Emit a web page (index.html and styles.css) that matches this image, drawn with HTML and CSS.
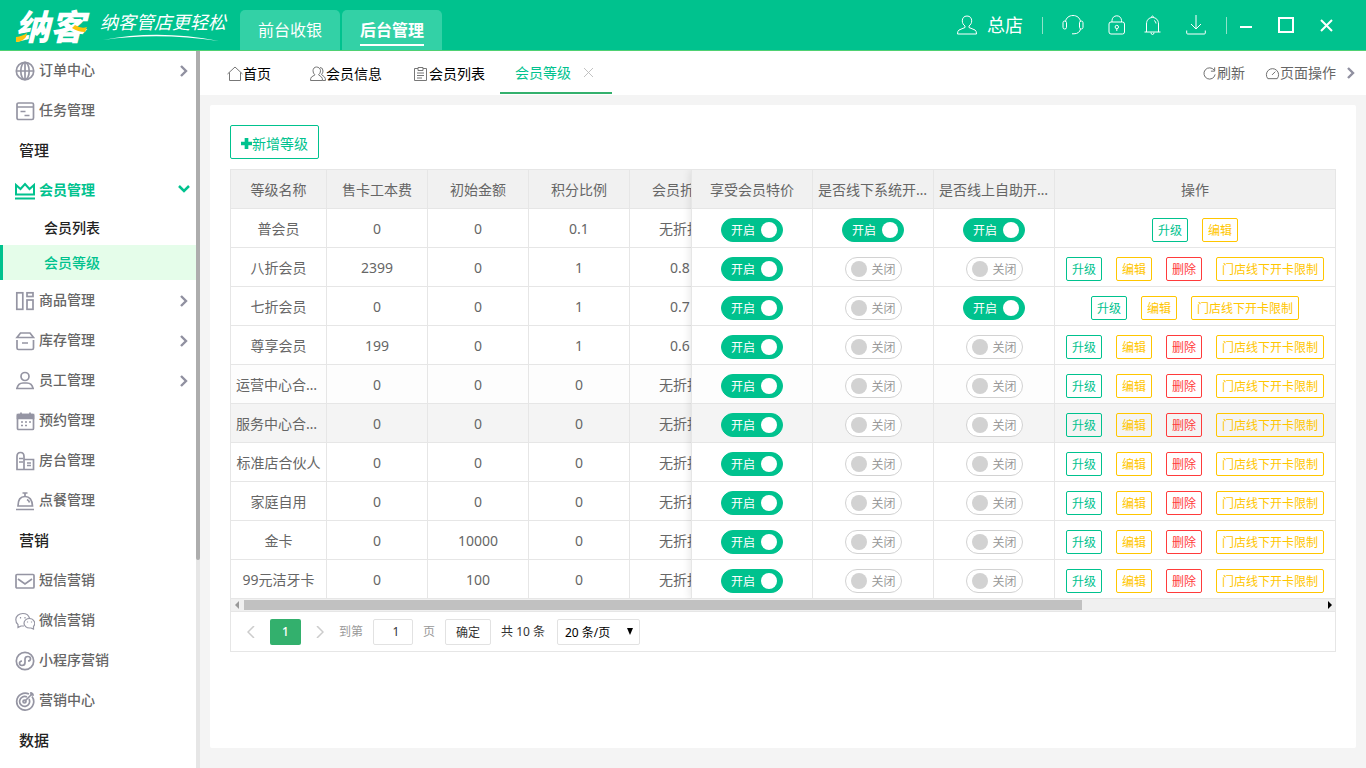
FILE: index.html
```html
<!DOCTYPE html>
<html lang="zh-CN">
<head>
<meta charset="utf-8">
<meta name="viewport" content="width=device-width, initial-scale=1">
<title>会员等级</title>
<link rel="stylesheet" href="styles.css">
</head>
<body>
<header class="topbar">
  <div class="brand">
    <span class="brand-name">纳客
      <svg class="brand-accent" viewBox="0 0 74 34" aria-hidden="true"><path d="M1 25q7-1 11-4l-1 4q-4 5-10 5z"/><path d="M60 13q6 4 12 2l-2 5q-7 0-13-4z"/></svg>
    </span>
    <span class="slogan">纳客管店更轻松
      <svg class="slogan-line" viewBox="0 0 118 8" aria-hidden="true"><path d="M1 6Q56-5 117 7Q56-2 1 6z"/></svg>
    </span>
  </div>
  <nav class="modes">
    <a class="mode" href="#cashier">前台收银</a>
    <a class="mode mode-active" href="#admin"><span>后台管理</span></a>
  </nav>
  <div class="tools">
    <button class="shop" type="button">
      <svg class="ico20" viewBox="0 0 20 20"><path d="M10 1c-3 0-4.700 2-4.700 4.800 0 2.200 1 4 2.700 5.200v1.500L2 15q-1.500 1-1.500 4h19q0-3-1.500-4l-6-2.500V11c1.700-1.200 2.700-3 2.700-5.200C14.700 3 13 1 10 1z"/></svg>
      <span>总店</span>
    </button>
    <i class="bar"></i>
    <button class="tool tool-headset" type="button" aria-label="客服"><svg class="ico22" viewBox="0 0 22 22"><path d="M3.500 7.500C4 4 7 1.500 11 1.500s7 2.500 7.500 6M18.500 15c-.5 3-3 4.800-6.500 4.800h-2"/><rect x="1" y="7" width="3.500" height="8" rx="1.700"/><rect x="17.500" y="7" width="3.500" height="8" rx="1.700"/></svg></button>
    <button class="tool" type="button" aria-label="锁屏"><svg class="ico20" viewBox="0 0 20 20"><rect x="2" y="7" width="15.500" height="12" rx="2"/><path d="M5 7V5.500C5 3 7 .8 9.800.8s4.700 2.200 4.700 4.700V7M9.800 13.500v2.500"/><circle cx="9.800" cy="12" r="1.700"/></svg></button>
    <button class="tool" type="button" aria-label="消息"><svg class="ico20" viewBox="0 0 20 20"><path d="M1.500 17h16M3.500 17V9c0-4 2.500-6.500 6-6.500s6 2.500 6 6.500v8M8.500 2.500q0-1.500 1-1.500t1 1.500M8 17.500q0 2 1.500 2t1.500-2M11 5.500q2 .8 2 3"/></svg></button>
    <button class="tool tool-down" type="button" aria-label="下载"><svg class="ico20" viewBox="0 0 20 20"><path d="M10 0v14M5 9l5 5 5-5M.7 15.500V18q0 1 1 1h16.600q1 0 1-1v-2.500"/></svg></button>
    <i class="bar"></i>
    <button class="win" type="button" aria-label="最小化"><svg class="ico18" viewBox="0 0 18 18"><path d="M3 11h12"/></svg></button>
    <button class="win" type="button" aria-label="最大化"><svg class="ico18" viewBox="0 0 18 18"><rect x="2" y="2" width="14" height="14"/></svg></button>
    <button class="win" type="button" aria-label="关闭"><svg class="ico18" viewBox="0 0 18 18"><path d="M4 4l11 11M15 4L4 15"/></svg></button>
  </div>
</header>
<div class="layout">
  <aside class="sidebar">
    <nav class="menu">
      <a class="item" href="#order"><svg class="ico20" viewBox="0 0 20 20"><circle cx="10" cy="10" r="8.700"/><ellipse cx="10" cy="10" rx="4.200" ry="8.700"/><path d="M1.500 10h17M10 1v18"/></svg><span>订单中心</span><svg class="arrow" viewBox="0 0 12 12"><path d="M3 1l5 5-5 5"/></svg></a>
      <a class="item" href="#task"><svg class="ico20" viewBox="0 0 20 20"><rect x="2" y="2" width="16.500" height="16.500" rx="1.500"/><path d="M2 6h16.500M5.500 10.500h5M9.500 14.500h5"/></svg><span>任务管理</span></a>
      <h2 class="group">管理</h2>
      <a class="item item-open" href="#member"><svg class="ico20" viewBox="0 0 20 20"><path d="M1 4v9.500h18V4l-4.500 4L10 3 5.500 8zM0 17.500h20"/></svg><span>会员管理</span><svg class="arrow" viewBox="0 0 12 12"><path d="M1 3l5 5 5-5"/></svg></a>
      <a class="sub" href="#list">会员列表</a>
      <a class="sub sub-active" href="#level">会员等级</a>
      <a class="item" href="#goods"><svg class="ico20" viewBox="0 0 20 20"><rect x="1.800" y="1.800" width="6" height="16.500"/><rect x="12" y="1.800" width="6" height="3.700"/><rect x="12" y="9" width="6" height="9.300"/></svg><span>商品管理</span><svg class="arrow" viewBox="0 0 12 12"><path d="M3 1l5 5-5 5"/></svg></a>
      <a class="item" href="#stock"><svg class="ico20" viewBox="0 0 20 20"><path d="M2 6.500h16.500L15 2H5.500zM2 9v8q0 1.500 1.500 1.500H17q1.500 0 1.500-1.500V9M7 12h6"/></svg><span>库存管理</span><svg class="arrow" viewBox="0 0 12 12"><path d="M3 1l5 5-5 5"/></svg></a>
      <a class="item" href="#staff"><svg class="ico20" viewBox="0 0 20 20"><circle cx="10" cy="5.500" r="4"/><path d="M2 17.500q1-5.500 6-5.500h4q5 0 6 5.500zM1 17.500h18"/></svg><span>员工管理</span><svg class="arrow" viewBox="0 0 12 12"><path d="M3 1l5 5-5 5"/></svg></a>
      <a class="item" href="#booking"><svg class="ico20" viewBox="0 0 20 20"><rect x="2.500" y="3.500" width="16" height="15" rx="1"/><path class="solid" d="M2.500 3.500h16v4h-16z"/><path d="M6 1.500v4M15 1.500v4M6 11h2M10 11h2M14 11h2M6 14.500h2M10 14.500h2"/></svg><span>预约管理</span></a>
      <a class="item" href="#room"><svg class="ico20" viewBox="0 0 20 20"><path d="M2 18.500v-13q0-4 3.500-4t3.500 4v13zM9 8.500h9.500v10H9M4 7.500h4M4 11h4M12 12h4M12 14.500h4"/></svg><span>房台管理</span></a>
      <a class="item" href="#dining"><svg class="ico20" viewBox="0 0 20 20"><path d="M1 18.500h18M3 15q0-9.500 7-9.500T17.500 15zM7.500 2h5M10 2v3M12 8.500q2 1 2.500 3"/></svg><span>点餐管理</span></a>
      <h2 class="group">营销</h2>
      <a class="item" href="#sms"><svg class="ico20" viewBox="0 0 20 20"><rect x="1" y="3.500" width="18" height="13.500" rx="1"/><path d="M3 8l7 5 7-5"/></svg><span>短信营销</span></a>
      <a class="item" href="#wechat"><svg class="ico20 thin" viewBox="0 0 20 20"><path d="M9 15H6l-3 1.500v-3Q.8 12 .8 8.500C.8 5 4 2.500 7.800 2.500c3.300 0 6 2 6.700 4.700M5.500 6v1.500M10 6v1.500"/><path d="M14.500 7.500c-3 0-5.500 2-5.500 4.700s2.500 4.800 5.500 4.800h1.500l2.500 1v-2.500c3-3.500 0-8-4-8zM12.500 10.500v1M16.500 10.500v1"/></svg><span>微信营销</span></a>
      <a class="item" href="#mini"><svg class="ico20" viewBox="0 0 20 20"><circle cx="10" cy="10" r="8.700"/><path d="M7 10q-2.500.2-2.500 2.300T7 14.500q3 0 3-3V8.300q0-2.800 2.800-2.800 2.700 0 2.700 2.200T13 10"/></svg><span>小程序营销</span></a>
      <a class="item" href="#promo"><svg class="ico20" viewBox="0 0 20 20"><path d="M17 5.500A8.500 8.500 0 1 1 14 3M14 8A5 5 0 1 1 12 6M9.500 10.500L18 2M16 1v3h3"/><circle cx="9.500" cy="10.500" r="1.500"/></svg><span>营销中心</span></a>
      <h2 class="group">数据</h2>
    </nav>
    <div class="side-scroll"><div class="side-thumb"></div></div>
  </aside>
  <main class="main">
    <div class="tabs">
      <a class="tab" href="#home"><svg class="ico16" viewBox="0 0 16 16"><path d="M.5 8L8 1l7.500 7M2.500 6.500v8h11v-8"/></svg><span>首页</span></a>
      <a class="tab" href="#info"><svg class="ico16" viewBox="0 0 16 16"><path d="M6.500 1C4.500 1 3 2.500 3 4.800q0 2.700 2 4L1.500 11Q.5 12 .5 14.500h12q0-2.500-1-3.500L8.500 8.800q2-1.300 2-4C10.500 2.500 8.500 1 6.500 1zM10 1.500q3 0 3 3.500 0 2-1.500 3.500l3 2.500q1 1 1 3.500h-3"/></svg><span>会员信息</span></a>
      <a class="tab" href="#list"><svg class="ico16" viewBox="0 0 16 16"><path d="M5 2.500H1.500v12h12v-12H10M5 1.500h5v3H5zM4 7h7M4 9.500h7M4 12h5"/></svg><span>会员列表</span></a>
      <a class="tab tab-active" href="#level"><span>会员等级</span><svg class="close" viewBox="0 0 10 10"><path d="M0 0l10 10M10 0L0 10"/></svg></a>
      <div class="page-tools">
        <button type="button"><svg class="ico16" viewBox="0 0 16 16"><path d="M13 4.500A6 6 0 1 0 14 9M13.500 1.500v4h-4"/></svg><span>刷新</span></button>
        <button type="button"><svg class="ico16" viewBox="0 0 16 16"><path d="M3 13.500a6.500 6.500 0 1 1 10 0zM7.500 9.500L11 6"/></svg><span>页面操作</span><svg class="arrow" viewBox="0 0 12 12"><path d="M3 1l5 5-5 5"/></svg></button>
      </div>
    </div>
    <section class="panel">
      <button class="add" type="button"><svg class="plus" viewBox="0 0 12 12"><path d="M6 0v12M0 6h12"/></svg><span>新增等级</span></button>
      <div class="grid">
        <div class="tables">
          <div class="scrolling">
            <table class="data">
              <colgroup><col class="c-name"><col class="c-num"><col class="c-num"><col class="c-num"><col class="c-num"></colgroup>
              <thead><tr><th>等级名称</th><th>售卡工本费</th><th>初始金额</th><th>积分比例</th><th>会员折扣</th></tr></thead>
              <tbody id="levels"></tbody>
            </table>
          </div>
          <div class="pinned">
            <table class="data">
              <colgroup><col class="c-flag"><col class="c-flag"><col class="c-flag"><col class="c-ops"></colgroup>
              <thead><tr><th>享受会员特价</th><th>是否线下系统开卡</th><th>是否线上自助开卡</th><th>操作</th></tr></thead>
              <tbody id="settings"></tbody>
            </table>
          </div>
        </div>
        <div class="hscroll">
          <svg class="hs-arrow hs-off" viewBox="0 0 12 12"><path d="M8 2v8L4 6z"/></svg>
          <div class="hs-track"><div class="hs-thumb"></div></div>
          <svg class="hs-arrow" viewBox="0 0 12 12"><path d="M5 2v8l4-4z"/></svg>
        </div>
        <div class="pager">
          <button class="step" type="button" aria-label="上一页"><svg viewBox="0 0 8 12"><path d="M7 0L1 6l6 6"/></svg></button>
          <button class="page" type="button">1</button>
          <button class="step" type="button" aria-label="下一页"><svg viewBox="0 0 8 12"><path d="M1 0l6 6-6 6"/></svg></button>
          <label class="muted" for="goto">到第</label>
          <input class="goto" id="goto" type="text" value="1">
          <span class="muted">页</span>
          <button class="ok" type="button">确定</button>
          <span class="total">共 10 条</span>
          <span class="size"><select aria-label="每页条数"><option>20 条/页</option></select></span>
        </div>
      </div>
    </section>
  </main>
</div>
<script src="script.js"></script>
</body>
</html>
```
FILE: styles.css
```css
* { box-sizing: border-box; }
body {
  margin: 0;
  height: 100vh;
  display: flex;
  flex-direction: column;
  overflow: hidden;
  background: #f4f4f4;
  color: #666;
  font: 14px/20px "Noto Sans", "Noto Sans CJK SC", sans-serif;
}
a { color: inherit; text-decoration: none; }
button, input, select { font: inherit; color: inherit; margin: 0; }
button { padding: 0; border: 0; background: none; cursor: pointer; }
svg { fill: none; stroke: currentColor; flex: none; display: block; }
.solid { fill: currentColor; }
.ico16 { width: 16px; height: 16px; }
.ico18 { width: 18px; height: 18px; }
.ico20 { width: 20px; height: 20px; }
.ico22 { width: 22px; height: 22px; }

/* Top bar */
.topbar {
  position: relative;
  z-index: 2;
  flex: none;
  display: flex;
  align-items: flex-end;
  height: 50px;
  background: #00c28e;
  box-shadow: 0 1px 0 #4fd173;
  color: #fff;
}
.brand { display: flex; align-items: center; width: 240px; height: 50px; padding-left: 15px; }
.brand-name { position: relative; width: 85px; padding-top: 3px; font-size: 35px; line-height: 47px; font-weight: 900; font-style: italic; }
.brand-accent { position: absolute; left: 0; top: 12px; width: 74px; height: 34px; fill: #fcc30b; stroke: none; }
.slogan { position: relative; font-size: 18px; line-height: 24px; font-style: italic; padding-bottom: 6px; white-space: nowrap; }
.slogan-line { position: absolute; left: 2px; bottom: -2px; width: 118px; height: 8px; fill: #fff; stroke: none; }
.modes { display: flex; gap: 2px; }
.mode { width: 100px; height: 40px; border-radius: 5px 5px 0 0; background: #33d1a6; font-size: 16px; line-height: 40px; text-align: center; }
.mode-active { font-weight: 700; }
.mode-active span { display: inline-block; line-height: 28px; border-bottom: 2px solid #fff; }
.tools { display: flex; align-items: center; height: 50px; margin-left: auto; padding-right: 31px; }
.shop { display: flex; align-items: center; gap: 10px; margin-right: 19px; font-size: 18px; }
.bar { width: 1px; height: 17px; background: #8fe2c9; }
.tool { margin-right: 16px; }
.tool-headset { margin: 0 23px 0 19px; }
.tool-down { margin: 0 20px 0 7px; }
.win { margin-left: 10px; }
.win + .win { margin-left: 22px; }
.win svg { stroke-width: 2; }

/* Sidebar */
.layout { flex: 1; display: flex; min-height: 0; }
.sidebar { flex: none; display: flex; width: 200px; background: #fff; }
.menu { flex: 1; overflow: hidden; }
.item { display: flex; align-items: center; height: 40px; padding: 0 6px 0 15px; gap: 4px; font-weight: 500; }
.item .ico20 { color: #9595a3; stroke-width: 1.700; margin-top: 2px; }
.item .thin { stroke-width: 1.200; }
.arrow { width: 12px; height: 12px; margin-left: auto; color: #9090a0; stroke-width: 2.400; }
.item .arrow { margin-top: 2px; }
.item-open { color: #00c28e; font-weight: 700; }
.item-open .ico20, .item-open .arrow { color: #00c28e; stroke-width: 2; }
.item-open .arrow { margin-top: -2px; stroke-width: 2.500; }
.group { margin: 0; padding-left: 19px; font-size: 15px; line-height: 40px; font-weight: 500; color: #222; }
.sub { display: block; padding-left: 44px; line-height: 35px; font-weight: 500; color: #222; }
.sub-active { padding-left: 41px; border-left: 3px solid #00c28e; background: #e5fdea; color: #00c28e; }
.side-scroll { width: 4px; background: #e6e6e6; }
.side-thumb { height: 71%; background: #adadad; border-radius: 0 0 2px 2px; }

/* Page tabs */
.main { flex: 1; min-width: 0; display: flex; flex-direction: column; }
.tabs { flex: none; display: flex; height: 45px; padding-left: 13px; background: #fff; }
.tab { display: flex; align-items: center; height: 44px; padding: 3px 17px 0 14px; margin-right: 0; color: #000; }
.tab:first-child { padding-right: 25px; }
.tab .ico16 { color: #777; }
.tab-active { padding: 3px 19px 0 15px; margin-left: -2px; gap: 13px; border-bottom: 2px solid #33b06d; color: #00c28e; }
.close { width: 9px; height: 9px; color: #bbb; }
.page-tools { display: flex; gap: 20px; margin-left: auto; padding-right: 9px; }
.page-tools button { display: flex; align-items: center; padding-top: 1px; }
.page-tools .ico16 { width: 15px; height: 15px; }
.page-tools .arrow { margin-left: 9px; }

/* Panel */
.panel { flex: 1; margin: 10px 10px 20px; padding: 20px; border-radius: 2px; background: #fff; }
.add { display: flex; align-items: center; height: 34px; margin-bottom: 10px; padding: 3px 10px 0; border: 1px solid #00c28e; border-radius: 2px; color: #00c28e; }
.plus { width: 11px; height: 11px; stroke-width: 4; }
.grid { border: 1px solid #e6e6e6; border-right-width: 0; box-shadow: inset -1px 0 0 #e6e6e6; }
.tables { display: flex; }
.scrolling { flex: 1; min-width: 0; overflow: hidden; }
.pinned { flex: none; position: relative; border-left: 1px solid #e6e6e6; background: #fff; box-shadow: -1px 0 8px rgba(0, 0, 0, .1); clip-path: inset(0 0 0 -10px); }
.data { table-layout: fixed; width: 0; border-collapse: separate; border-spacing: 0; }
.c-name { width: 96px; }
.c-num { width: 101px; }
.c-flag { width: 121px; }
.c-ops { width: 281px; }
.data th, .data td { height: 39px; padding: 2px 5px 0; border: solid #e6e6e6; border-width: 0 1px 1px 0; font-weight: 400; text-align: center; white-space: nowrap; overflow: hidden; text-overflow: ellipsis; }
.data th { background: #f1f1f1; }
.data tr.hover td { background: #f4f4f4; }
.data tr.fading td { background: #fdfdfd; }
.ops { display: flex; justify-content: center; gap: 14px; padding-top: 1px; }
.op { height: 24px; padding: 1px 5px 0; border: 1px solid; border-radius: 2px; background: #fff; font-size: 12px; line-height: 21px; }
.hover .op { background: none; }
.op-up { color: #00c28e; }
.op-edit { color: #ffc600; }
.op-del { color: #ff3b3b; }
.switch { display: flex; align-items: center; justify-content: space-between; width: 57px; height: 24px; margin: 1px auto 0; padding: 0 5px; border: 1px solid #d2d2d2; border-radius: 12px; background: #fff; color: #999; font-size: 12px; }
.switch span { padding-top: 2px; }
.switch input { appearance: none; width: 16px; height: 16px; margin: 0; border-radius: 50%; background: #d2d2d2; }
.switch:has(:checked) { flex-direction: row-reverse; width: 62px; padding-left: 9px; border-color: #00c28e; background: #00c28e; color: #fff; }
.switch input:checked { background: #fff; }

/* Horizontal scroll and pager */
.hscroll { display: flex; align-items: center; height: 13px; margin-right: 1px; border-bottom: 1px solid #e6e6e6; background: #f0f0f0; }
.hs-arrow { width: 12px; height: 12px; fill: #000; stroke: none; }
.hs-off { fill: #999; }
.hs-track { flex: 1; padding-left: 1px; }
.hs-thumb { width: 77.7%; height: 10px; background: #c1c1c1; }
.pager { display: flex; align-items: center; height: 39px; padding-left: 16px; font-size: 12px; color: #333; }
.step { color: #ccc; }
.step svg { width: 8px; height: 12px; stroke-width: 1.500; }
.page { width: 31px; height: 26px; margin: 0 15px; border-radius: 2px; background: #33b06d; color: #fff; font-weight: 500; }
.muted { margin-right: 10px; color: #999; }
.step + .muted { margin-left: 15px; }
.goto { width: 40px; height: 26px; margin-right: 10px; border: 1px solid #e2e2e2; border-radius: 2px; text-align: center; padding: 0 0 0 6px; }
.ok { width: 46px; height: 26px; border: 1px solid #e2e2e2; border-radius: 2px; margin-right: 10px; padding-top: 2px; }
.total { margin-right: 12px; }
.size { position: relative; color: #000; }
.size select { appearance: none; display: block; width: 83px; height: 26px; padding: 2px 7px 0; border: 1px solid #e2e2e2; border-radius: 2px; background: #fff; }
.size::after { content: ""; position: absolute; right: 7px; top: 9px; border: solid transparent; border-width: 7px 3px 0; border-top-color: #000; }
```
FILE: script.js
```js
const levels = [
  ["普会员", "0", "0", "0.1", "无折扣", [1, 1, 1], "ue"],
  ["八折会员", "2399", "0", "1", "0.8", [1, 0, 0], "uedl"],
  ["七折会员", "0", "0", "1", "0.7", [1, 0, 1], "uel"],
  ["尊享会员", "199", "0", "1", "0.6", [1, 0, 0], "uedl"],
  ["运营中心合伙人", "0", "0", "0", "无折扣", [1, 0, 0], "uedl", "fading"],
  ["服务中心合伙人", "0", "0", "0", "无折扣", [1, 0, 0], "uedl", "hover"],
  ["标准店合伙人", "0", "0", "0", "无折扣", [1, 0, 0], "uedl"],
  ["家庭自用", "0", "0", "0", "无折扣", [1, 0, 0], "uedl"],
  ["金卡", "0", "10000", "0", "无折扣", [1, 0, 0], "uedl"],
  ["99元洁牙卡", "0", "100", "0", "无折扣", [1, 0, 0], "uedl"]
];
const ops = {
  u: ["op-up", "升级"],
  e: ["op-edit", "编辑"],
  d: ["op-del", "删除"],
  l: ["op-edit", "门店线下开卡限制"]
};
const toggle = on =>
  `<td><label class="switch"><input type="checkbox"${on ? " checked" : ""}><span>${on ? "开启" : "关闭"}</span></label></td>`;
const button = key => `<button class="op ${ops[key][0]}" type="button">${ops[key][1]}</button>`;

document.getElementById("levels").innerHTML = levels
  .map(r => `<tr class="${r[7] || ""}">${r.slice(0, 5).map(v => `<td>${v}</td>`).join("")}</tr>`)
  .join("");
document.getElementById("settings").innerHTML = levels
  .map(r => `<tr class="${r[7] || ""}">${r[5].map(toggle).join("")}<td><div class="ops">${[...r[6]].map(button).join("")}</div></td></tr>`)
  .join("");
```
